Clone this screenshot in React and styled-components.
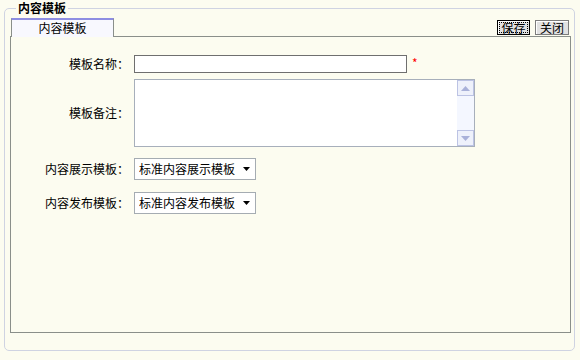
import React from 'react'
import styled, { createGlobalStyle } from 'styled-components'

const GlobalStyle = createGlobalStyle`
  html, body {
    margin: 0;
    background: #fcfcf0;
  }
  body {
    font-family: "Noto Sans CJK SC", "Liberation Sans", sans-serif;
    font-size: 12px;
    line-height: 14px;
    color: #000;
  }
`

const Frame = styled.fieldset`
  margin: 0 5px 0 4px;
  padding: 2px 3px 17px 5px;
  border: 1px solid #cfd3e2;
  border-radius: 5px;
  min-width: 0;
`

const Legend = styled.legend`
  margin-left: 6px;
  padding: 0 2px;
  font-weight: 700;
  line-height: 16px;
`

const TabBar = styled.div`
  display: flex;
  align-items: flex-end;
  justify-content: space-between;
  height: 18px;
`

const Tab = styled.div`
  position: relative;
  z-index: 1;
  margin-left: 1px;
  margin-bottom: -1px;
  width: 101px;
  height: 17px;
  border-top: 2px solid #8e8ee2;
  border-left: 1px solid #8a8f8a;
  border-right: 1px solid #8a8f8a;
  background: #f8f8fe;
  text-align: center;
  line-height: 16px;
`

const Actions = styled.div`
  display: flex;
  gap: 5px;
  margin: 0 2px 1px 0;
`

const Button = styled.button`
  font: inherit;
  height: 15px;
  width: ${p => p.$w}px;
  padding: 0;
  line-height: 12px;
  color: #000;
  background: #e2e2e2;
  border: 1px solid ${p => (p.$focus ? '#000' : '#7c7c7c')};
  box-shadow: inset 1px 1px 0 #fff;
  outline: ${p => (p.$focus ? '1px dotted #000' : 'none')};
  outline-offset: -3px;
`

const Panel = styled.div`
  height: 295px;
  border: 1px solid #8a8f8a;
`

const Row = styled.div`
  display: flex;
  align-items: center;
  gap: 5px;
  margin-top: ${p => p.$top}px;
`

const Label = styled.div`
  width: 118px;
  text-align: right;
  white-space: nowrap;
`

const TextInput = styled.input`
  box-sizing: border-box;
  width: 273px;
  height: 18px;
  margin: 0;
  padding: 1px 3px;
  font: inherit;
  background: #fff;
  border: 1px solid #6f6f6f;
  outline: none;
`

const Required = styled.span`
  color: #f00;
  font-size: 12px;
  line-height: 10px;
  align-self: flex-start;
  margin-top: 3px;
`

const Memo = styled.div`
  box-sizing: border-box;
  display: flex;
  width: 341px;
  height: 68px;
  background: #fff;
  border: 1px solid #a7afbb;
`

const MemoText = styled.textarea`
  flex: 1;
  margin: 0;
  padding: 2px;
  border: 0;
  resize: none;
  font: inherit;
  outline: none;
  background: transparent;
`

const ScrollTrack = styled.div`
  display: flex;
  flex-direction: column;
  justify-content: space-between;
  width: 17px;
  background: #f4f7ff;
`

const ScrollButton = styled.div`
  box-sizing: border-box;
  display: flex;
  align-items: center;
  justify-content: center;
  height: 16px;
  border: 1px solid #bcc3e4;
  background: #eef1fb;
`

const SelectBox = styled.div`
  position: relative;
  width: 122px;
  height: 22px;
`

const Select = styled.select`
  box-sizing: border-box;
  appearance: none;
  width: 100%;
  height: 100%;
  margin: 0;
  padding: 0 0 0 4px;
  font: inherit;
  color: #000;
  background: #fff;
  border: 1px solid #a5acb2;
  border-radius: 0;
  outline: none;
`

const Caret = styled.svg`
  position: absolute;
  right: 6px;
  top: 9px;
  pointer-events: none;
`

const Arrow = ({ up }) => (
  <svg width="9" height="5" viewBox="0 0 9 5">
    <path d={up ? 'M0 5 L4.5 0 L9 5 Z' : 'M0 0 L9 0 L4.5 5 Z'} fill="#a9b1d9" />
  </svg>
)

const Dropdown = ({ value }) => (
  <SelectBox>
    <Select defaultValue={value}>
      <option>{value}</option>
    </Select>
    <Caret width="7" height="4" viewBox="0 0 7 4">
      <path d="M0 0 L7 0 L3.5 4 Z" fill="#000" />
    </Caret>
  </SelectBox>
)

export default function App() {
  return (
    <>
      <GlobalStyle />
      <Frame>
        <Legend>内容模板</Legend>
        <TabBar>
          <Tab>内容模板</Tab>
          <Actions>
            <Button $w={33} $focus>保存</Button>
            <Button $w={34}>关闭</Button>
          </Actions>
        </TabBar>
        <Panel>
          <Row $top={18}>
            <Label>模板名称：</Label>
            <TextInput type="text" />
            <Required>*</Required>
          </Row>
          <Row $top={6}>
            <Label>模板备注：</Label>
            <Memo>
              <MemoText />
              <ScrollTrack>
                <ScrollButton><Arrow up /></ScrollButton>
                <ScrollButton><Arrow /></ScrollButton>
              </ScrollTrack>
            </Memo>
          </Row>
          <Row $top={11}>
            <Label>内容展示模板：</Label>
            <Dropdown value="标准内容展示模板" />
          </Row>
          <Row $top={12}>
            <Label>内容发布模板：</Label>
            <Dropdown value="标准内容发布模板" />
          </Row>
        </Panel>
      </Frame>
    </>
  )
}
